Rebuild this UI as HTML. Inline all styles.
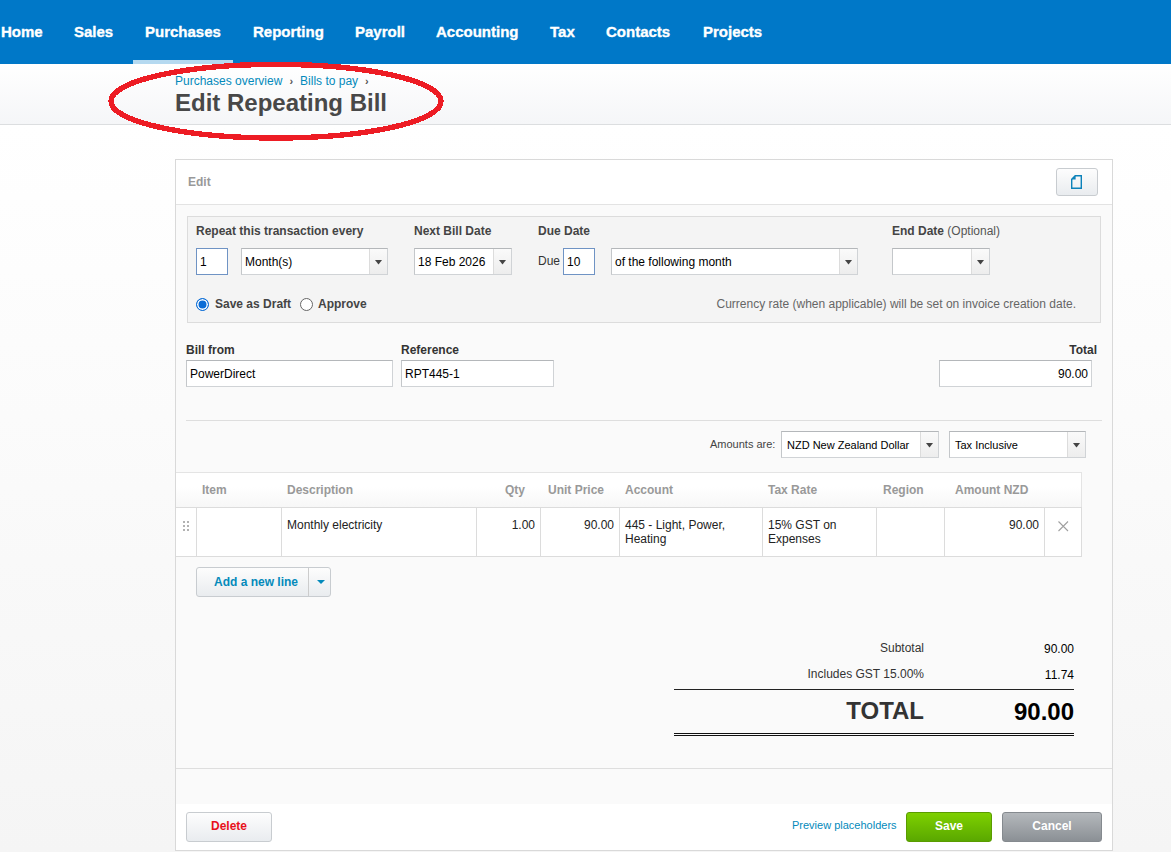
<!DOCTYPE html>
<html><head><meta charset="utf-8"><title>Edit Repeating Bill</title>
<style>
*{box-sizing:border-box;margin:0;padding:0}
html,body{width:1171px;height:852px;overflow:hidden}
body{font-family:"Liberation Sans",Arial,sans-serif;font-size:12px;color:#222;background:linear-gradient(#fff 125px,#f5f5f5 852px);position:relative}
.abs{position:absolute}
#nav{position:absolute;left:0;top:0;width:1171px;height:64px;background:#0078c8}
#nav a{position:absolute;top:23px;color:#fff;font-weight:bold;font-size:15px;line-height:18px;text-decoration:none;white-space:nowrap;letter-spacing:0;-webkit-text-stroke:0.35px #fff}
#nav .ind{position:absolute;left:133px;top:60px;width:100px;height:4px;background:#b5d9f0}
#sub{position:absolute;left:0;top:64px;width:1171px;height:61px;background:linear-gradient(#fff,#f5f6f8);border-bottom:1px solid #dcdee0}
#crumb{position:absolute;left:175px;top:74px;font-size:12px;line-height:14px;color:#048abb;white-space:nowrap}
#crumb span{color:#555;font-size:11px;font-weight:bold;margin:0 7px}
h1{position:absolute;left:175px;top:88px;font-size:24px;line-height:30px;color:#484848;font-weight:bold;white-space:nowrap}
#panel{position:absolute;left:175px;top:159px;width:938px;height:692px;border:1px solid #d9d9d9;background:#fafafa}
#phead{position:absolute;left:0;top:0;width:936px;height:45px;background:#fff;border-bottom:1px solid #e3e3e3}
.lbl{position:absolute;font-weight:bold;color:#444;font-size:12px;line-height:14px;white-space:nowrap}
.txt{position:absolute;font-size:12px;line-height:14px;white-space:nowrap}
.inp{position:absolute;background:#fff;border:1px solid #d0d3d6;border-top-color:#b4b7ba;border-left-color:#c4c7ca;height:27px;font-size:12px;line-height:25px;padding-left:3px;padding-top:1px;white-space:nowrap;color:#000}
.inp.blue{border-color:#6f93c4}
.dd{position:absolute;right:0;top:0;width:18px;height:25px;border-left:1px solid #dcdcdc;background:linear-gradient(#fafafa,#ededed)}
.dd:after{content:"";position:absolute;left:5px;top:11px;width:7px;height:4.5px;background:#444;clip-path:polygon(0 0,100% 0,50% 100%)}
.btn{position:absolute;border:1px solid #c8ccd0;border-radius:3px;background:linear-gradient(#fdfdfd,#e9ecef)}
.btn .bl{position:absolute;left:0;right:0;top:6px;text-align:center;font-weight:bold;font-size:12px;line-height:14px}
.btn.green{background:linear-gradient(#7ed000,#5aa800);border-color:#5a9c00;color:#fff}
.btn.grey{background:linear-gradient(#b4b8bc,#8b9095);border-color:#858a8f;color:#fff}
.radio{position:absolute;width:13px;height:13px;border-radius:50%;border:1px solid #666;background:#fff}
.radio.on{border-color:#0a6cd6}
.radio.on{background:#0a6cd6;box-shadow:inset 0 0 0 1.5px #fff}
.th{position:absolute;top:323px;font-weight:bold;color:#999;font-size:12px;line-height:14px;white-space:nowrap}
.td{position:absolute;top:358px;font-size:12px;line-height:14px;color:#222;white-space:nowrap}
.vl{position:absolute;top:348px;width:1px;height:48px;background:#dcdcdc}
</style></head><body>
<div id="nav">
<a style="left:1px">Home</a><a style="left:74px">Sales</a><a style="left:145px">Purchases</a><a style="left:253px">Reporting</a><a style="left:355px">Payroll</a><a style="left:436px">Accounting</a><a style="left:550px">Tax</a><a style="left:606px">Contacts</a><a style="left:703px">Projects</a>
<div class="ind"></div>
</div>
<div id="sub"></div>
<div id="crumb">Purchases overview<span>›</span>Bills to pay<span>›</span></div>
<h1>Edit Repeating Bill</h1>
<svg class="abs" style="left:100px;top:55px" width="360" height="95" shape-rendering="crispEdges"><ellipse cx="176" cy="46.2" rx="165" ry="36.8" fill="none" stroke="#ed1c24" stroke-width="5.4"/></svg>
<div id="panel">
<div id="phead"></div>
<div class="lbl" style="left:12px;top:15px;color:#999">Edit</div>
<div class="btn" style="left:880px;top:8px;width:42px;height:28px"><svg width="13" height="16" viewBox="0 0 13 16" style="position:absolute;left:13px;top:5px"><path d="M5.2 1.7H11.3V14.3H1.7V5.2Z" fill="none" stroke="#0c82ba" stroke-width="1.4"/><path d="M5.6 1.7V5.6H1.7Z" fill="#0c82ba"/></svg></div>
<!-- repeat box -->
<div class="abs" style="left:11px;top:56px;width:914px;height:107px;background:#f4f4f4;border:1px solid #dcdcdc"></div>
<div class="lbl" style="left:20px;top:64px">Repeat this transaction every</div>
<div class="lbl" style="left:238px;top:64px">Next Bill Date</div>
<div class="lbl" style="left:362px;top:64px">Due Date</div>
<div class="lbl" style="left:716px;top:64px">End Date <span style="font-weight:normal;color:#555">(Optional)</span></div>
<div class="inp blue" style="left:20px;top:88px;width:32px">1</div>
<div class="inp" style="left:65px;top:88px;width:147px">Month(s)<div class="dd"></div></div>
<div class="inp" style="left:238px;top:88px;width:98px">18 Feb 2026<div class="dd"></div></div>
<div class="txt" style="left:362px;top:94px;color:#333">Due</div>
<div class="inp blue" style="left:387px;top:88px;width:32px">10</div>
<div class="inp" style="left:435px;top:88px;width:247px">of the following month<div class="dd"></div></div>
<div class="inp" style="left:716px;top:88px;width:98px"><div class="dd"></div></div>
<div class="radio on" style="left:20px;top:138px"></div>
<div class="lbl" style="left:39px;top:137px">Save as Draft</div>
<div class="radio" style="left:124px;top:138px"></div>
<div class="lbl" style="left:142px;top:137px">Approve</div>
<div class="txt" style="right:36px;top:137px;color:#666">Currency rate (when applicable) will be set on invoice creation date.</div>
<!-- bill from -->
<div class="lbl" style="left:10px;top:183px;color:#333">Bill from</div>
<div class="inp" style="left:10px;top:200px;width:207px">PowerDirect</div>
<div class="lbl" style="left:225px;top:183px;color:#333">Reference</div>
<div class="inp" style="left:225px;top:200px;width:153px">RPT445-1</div>
<div class="lbl" style="right:15px;top:183px;color:#333">Total</div>
<div class="inp" style="left:763px;top:200px;width:153px;text-align:right;padding-right:3px">90.00</div>
<div class="abs" style="left:10px;top:260px;width:916px;height:1px;background:#dedede"></div>
<div class="txt" style="left:534px;top:277px;font-size:11px;color:#444">Amounts are:</div>
<div class="inp" style="left:605px;top:271px;width:158px;font-size:11px;padding-left:5px">NZD New Zealand Dollar<div class="dd"></div></div>
<div class="inp" style="left:773px;top:271px;width:137px;font-size:11px;padding-left:5px">Tax Inclusive<div class="dd"></div></div>
<!-- table -->
<div class="abs" style="left:0;top:312px;width:906px;height:36px;background:linear-gradient(#fff 40%,#f7f7f7);border:1px solid #e4e4e4;border-left:0"></div>
<div class="th" style="left:26px">Item</div>
<div class="th" style="left:111px">Description</div>
<div class="th" style="left:329px">Qty</div>
<div class="th" style="left:372px">Unit Price</div>
<div class="th" style="left:449px">Account</div>
<div class="th" style="left:592px">Tax Rate</div>
<div class="th" style="left:707px">Region</div>
<div class="th" style="left:779px">Amount NZD</div>
<div class="abs" style="left:0;top:347px;width:906px;height:50px;background:#fff;border:1px solid #dcdcdc;border-left:0"></div><div class="vl" style="left:20px"></div>
<div class="vl" style="left:105px"></div><div class="vl" style="left:300px"></div><div class="vl" style="left:364px"></div><div class="vl" style="left:443px"></div><div class="vl" style="left:586px"></div><div class="vl" style="left:700px"></div><div class="vl" style="left:768px"></div><div class="vl" style="left:868px"></div>
<svg class="abs" style="left:7px;top:361px" width="6" height="10" shape-rendering="crispEdges"><g fill="#b2b2b2"><rect x="0" y="0" width="2" height="2"/><rect x="4" y="0" width="2" height="2"/><rect x="0" y="4" width="2" height="2"/><rect x="4" y="4" width="2" height="2"/><rect x="0" y="8" width="2" height="2"/><rect x="4" y="8" width="2" height="2"/></g></svg>
<div class="td" style="left:111px">Monthly electricity</div>
<div class="td" style="left:300px;width:59px;text-align:right">1.00</div>
<div class="td" style="left:364px;width:74px;text-align:right">90.00</div>
<div class="td" style="left:449px">445 - Light, Power,<br>Heating</div>
<div class="td" style="left:592px">15% GST on<br>Expenses</div>
<div class="td" style="left:768px;width:95px;text-align:right">90.00</div>
<svg class="abs" style="left:881.5px;top:360.5px" width="11" height="11"><path d="M0.5 0.5L10 10M10 0.5L0.5 10" stroke="#a0a0a0" stroke-width="1.1" fill="none"/></svg>
<!-- add line -->
<div class="btn" style="left:20px;top:407px;width:135px;height:30px"><span style="position:absolute;left:17px;top:7px;font-weight:bold;color:#048abb;font-size:12px;line-height:14px">Add a new line</span><i style="position:absolute;left:111px;top:0;width:1px;height:28px;background:#ccc"></i><i style="position:absolute;left:119.5px;top:12px;border:4px solid transparent;border-top:4px solid #048abb;border-bottom:0"></i></div>
<!-- totals -->
<div class="txt" style="right:188px;top:481px;color:#333">Subtotal</div>
<div class="txt" style="right:38px;top:482px;color:#000">90.00</div>
<div class="txt" style="right:188px;top:507px;color:#333">Includes GST 15.00%</div>
<div class="txt" style="right:38px;top:508px;color:#000">11.74</div>
<div class="abs" style="left:498px;top:529px;width:400px;height:1px;background:#222"></div>
<div class="txt" style="right:188px;top:537px;font-size:24px;line-height:28px;font-weight:bold;color:#333">TOTAL</div>
<div class="txt" style="right:38px;top:538px;font-size:24px;line-height:28px;font-weight:bold;color:#000">90.00</div>
<div class="abs" style="left:498px;top:573px;width:400px;height:3px;border-top:1px solid #111;border-bottom:1px solid #111"></div>
<div class="abs" style="left:0;top:608px;width:936px;height:1px;background:#dedede"></div>
<div class="abs" style="left:0;top:644px;width:936px;height:46px;background:#fff"></div>
<div class="btn" style="left:10px;top:652px;width:86px;height:30px"><span class="bl" style="color:#e8111c">Delete</span></div>
<div class="txt" style="left:616px;top:658px;font-size:11px;color:#048abb">Preview placeholders</div>
<div class="btn green" style="left:730px;top:652px;width:86px;height:30px"><span class="bl">Save</span></div>
<div class="btn grey" style="left:826px;top:652px;width:100px;height:30px"><span class="bl">Cancel</span></div>
</div>
</body></html>
